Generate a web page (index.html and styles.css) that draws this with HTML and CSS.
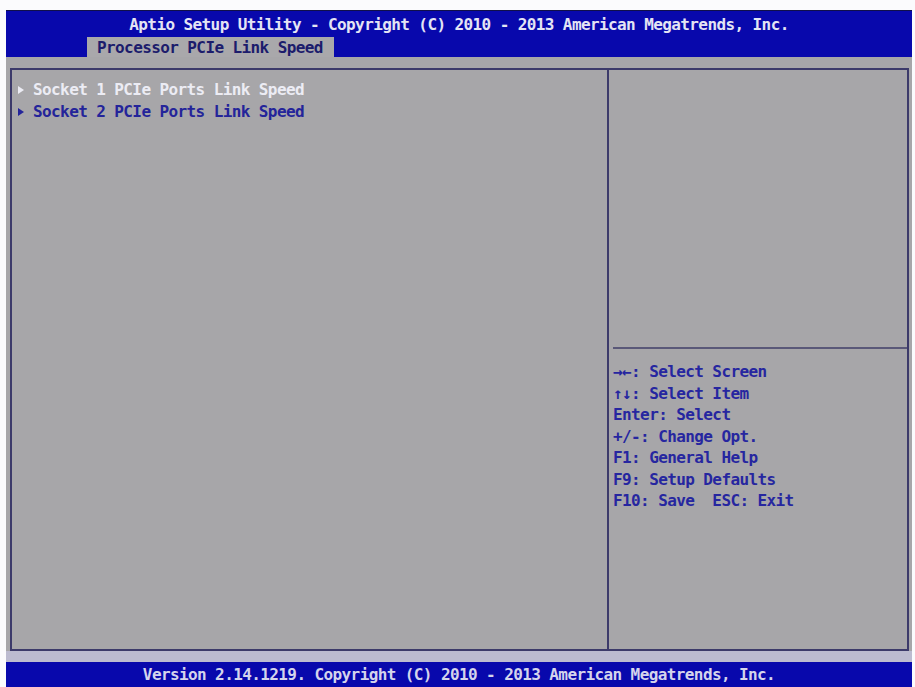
FILE: index.html
```html
<!DOCTYPE html>
<html>
<head>
  <title>Aptio Setup Utility</title>
  <link rel="stylesheet" href="styles.css">
</head>
<body>
  <div class="screen">
    <div class="top-bar">
      <div class="title">Aptio Setup Utility - Copyright (C) 2010 - 2013 American Megatrends, Inc.</div>
      <div class="tabs">
        <span class="tab">Processor PCIe Link Speed</span>
      </div>
    </div>

    <div class="main">
      <div class="panel">
        <div class="menu">
          <div class="item selected">Socket 1 PCIe Ports Link Speed</div>
          <div class="item">Socket 2 PCIe Ports Link Speed</div>
        </div>
        <div class="side">
          <div class="help-box"></div>
          <div class="keys">
            <div>&rarr;&larr;: Select Screen</div>
            <div>&uarr;&darr;: Select Item</div>
            <div>Enter: Select</div>
            <div>+/-: Change Opt.</div>
            <div>F1: General Help</div>
            <div>F9: Setup Defaults</div>
            <div>F10: Save  ESC: Exit</div>
          </div>
        </div>
      </div>
    </div>

    <div class="bottom-strip"></div>
    <div class="footer">Version 2.14.1219. Copyright (C) 2010 - 2013 American Megatrends, Inc.</div>
  </div>
</body>
</html>
```

FILE: styles.css
```css
body {
  margin: 0;
  padding: 0;
  background-color: #fbfbfd;
  font-family: "DejaVu Sans Mono", "Liberation Mono", monospace;
  font-weight: bold;
  font-size: 16px;
  letter-spacing: -0.6px;
}

.screen {
  margin: 10px 3px 0 6px;
  height: 677px;
  display: flex;
  flex-direction: column;
  background-color: #a7a6a9;
}

/* blue title bar with the page tab */
.top-bar {
  background-color: #0808ac;
  border-top: 1px solid #10104a;
  height: 46px;
  display: flex;
  flex-direction: column;
}

.title {
  color: #e4e4f4;
  text-align: center;
  height: 26px;
  line-height: 28px;
  white-space: pre;
}

.tabs {
  display: flex;
  padding-left: 81px;
}

.tab {
  background-color: #a9a8ab;
  color: #1c1c6c;
  height: 20px;
  line-height: 21px;
  padding: 0 11px 0 10px;
  white-space: pre;
}

.main {
  padding: 11px 3px 0 4px;
}

.panel {
  height: 579px;
  border: 2px solid #3c3a6a;
  display: flex;
}

.menu {
  width: 595px;
  border-right: 2px solid #3c3a6a;
  padding-top: 9px;
}

.item {
  color: #24249a;
  height: 22px;
  line-height: 22px;
  padding-left: 21px;
  position: relative;
  white-space: pre;
}

.item::before {
  content: "";
  position: absolute;
  left: 6px;
  top: 7px;
  border-left: 6px solid #24249a;
  border-top: 4px solid transparent;
  border-bottom: 4px solid transparent;
}

.item.selected {
  color: #ececf4;
}

.item.selected::before {
  border-left-color: #ececf4;
}

.side {
  flex: 1;
  display: flex;
  flex-direction: column;
}

.help-box {
  flex-shrink: 0;
  height: 277px;
  margin-left: 4px;
  border-bottom: 2px solid #5a5878;
}

.keys {
  padding: 12px 0 0 4px;
  color: #2626a0;
  line-height: 21.5px;
}

.keys div {
  white-space: pre;
}

.bottom-strip {
  height: 11px;
  background-color: #bcbbd0;
}

.footer {
  flex: 1;
  background-color: #0808ac;
  color: #d4d4ec;
  text-align: center;
  line-height: 25px;
  white-space: pre;
}
```
